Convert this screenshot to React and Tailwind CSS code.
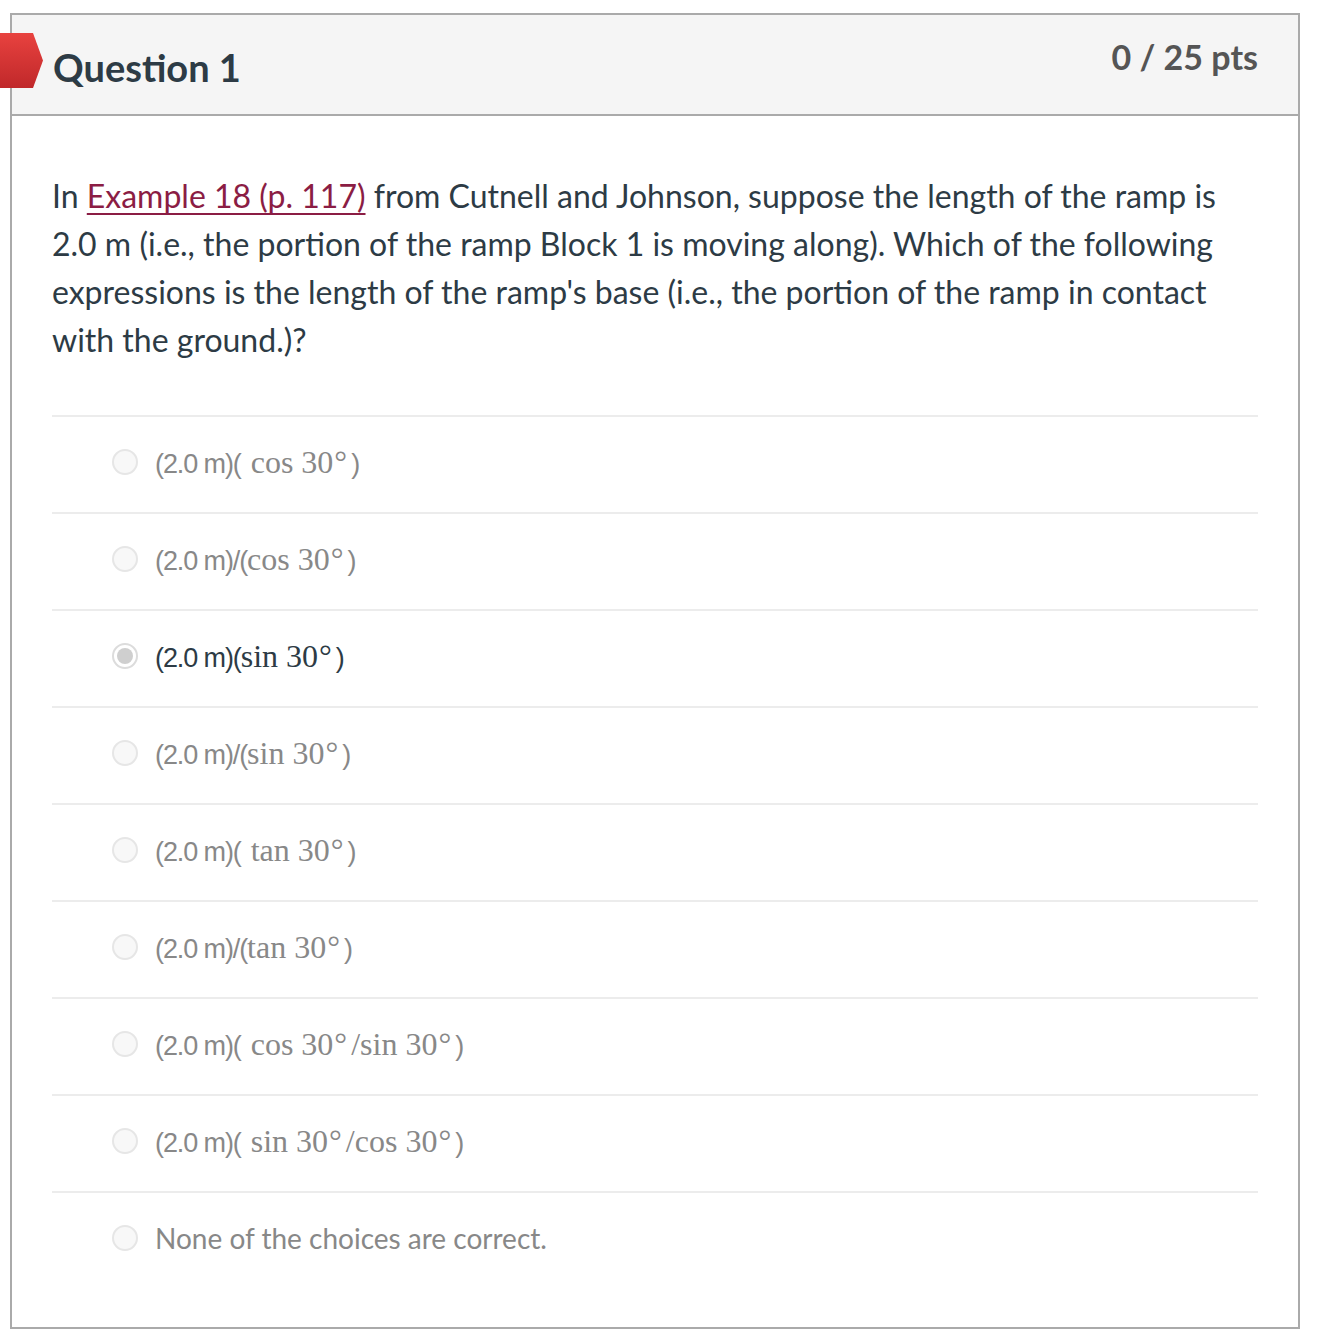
import React from "react";

const sans = "font-['Liberation_Sans',Arial,sans-serif]";
const serif = "font-['Liberation_Serif','Times_New_Roman',serif]";

function Radio({ selected }) {
  if (selected) {
    return (
      <span className="flex h-[26px] w-[26px] shrink-0 items-center justify-center rounded-full border-2 border-[#dcdcdc] bg-white">
        <span className="h-[16px] w-[16px] rounded-full bg-[#cfcfcf]" />
      </span>
    );
  }
  return <span className="h-[26px] w-[26px] shrink-0 rounded-full border-2 border-[#e6e6e6] bg-[#f8f8f8]" />;
}

function Pre({ children }) {
  return <span className={`${sans} text-[27px] tracking-[-1.1px]`}>{children}</span>;
}
function M({ children, gap }) {
  return <span className={`${serif} text-[32px] ${gap ? "ml-[10px]" : ""}`}>{children}</span>;
}
function Deg() {
  return <span className={`${serif} ml-[1px] mr-[4px] text-[32px]`}>°</span>;
}
function Close() {
  return <span className={`${sans} text-[27px]`}>)</span>;
}

const answers = [
  { el: <><Pre>(2.0 m)(</Pre><M gap>cos 30</M><Deg /><Close /></> },
  { el: <><Pre>(2.0 m)/(</Pre><M>cos 30</M><Deg /><Close /></> },
  { el: <><Pre>(2.0 m)(</Pre><M>sin 30</M><Deg /><Close /></>, selected: true },
  { el: <><Pre>(2.0 m)/(</Pre><M>sin 30</M><Deg /><Close /></> },
  { el: <><Pre>(2.0 m)(</Pre><M gap>tan 30</M><Deg /><Close /></> },
  { el: <><Pre>(2.0 m)/(</Pre><M>tan 30</M><Deg /><Close /></> },
  { el: <><Pre>(2.0 m)(</Pre><M gap>cos 30</M><Deg /><M>/sin 30</M><Deg /><Close /></> },
  { el: <><Pre>(2.0 m)(</Pre><M gap>sin 30</M><Deg /><M>/cos 30</M><Deg /><Close /></> },
  { el: <span className="text-[28px]">None of the choices are correct.</span> },
];

export default function App() {
  return (
    <div className="bg-white pl-[10px] pt-[13px] pb-[9px] font-['Lato','Liberation_Sans',sans-serif]">
      <div className="relative w-[1290px] border-2 border-[#aaaaaa]">
        <svg
          className="absolute left-[-12px] top-[18px]"
          width="43"
          height="55"
          viewBox="0 0 43 55"
        >
          <defs>
            <linearGradient id="flag" x1="0" y1="0" x2="0" y2="1">
              <stop offset="0" stopColor="#e8423f" />
              <stop offset="1" stopColor="#c0282a" />
            </linearGradient>
          </defs>
          <polygon points="0,0 33,0 43,27.5 33,55 0,55" fill="url(#flag)" />
        </svg>
        <div className="flex h-[101px] items-start justify-between border-b-2 border-[#aaaaaa] bg-[#f5f5f5] pl-[41px] pr-[40px]">
          <div className="pt-[33px] text-[38px] font-bold leading-[38px] text-[#2d3b45]">Question 1</div>
          <div className="pt-[25px] text-[34px] font-bold leading-[34px] text-[#555555]">0 / 25 pts</div>
        </div>
        <div className="px-[40px] pt-[56px] pb-[39px]">
          <p className="text-[32px] leading-[48px] text-[#2d3b45]">
            In{" "}
            <a href="#" className="text-[#8b1d44] underline decoration-[2px] underline-offset-[5px]">
              Example 18 (p. 117)
            </a>{" "}
            from Cutnell and Johnson, suppose the length of the ramp is 2.0 m (i.e., the portion of the ramp Block 1 is
            moving along). Which of the following expressions is the length of the ramp's base (i.e., the portion of the
            ramp in contact with the ground.)?
          </p>
          <div className="mt-[51px]">
            {answers.map((a, i) => (
              <div
                key={i}
                className={`flex h-[97px] items-center border-t-2 border-[#ececec] pb-[5px] pl-[60px] ${
                  a.selected ? "text-[#2d3b45]" : "text-[#888888]"
                }`}
              >
                <Radio selected={a.selected} />
                <div className="ml-[17px] whitespace-nowrap leading-none">{a.el}</div>
              </div>
            ))}
          </div>
        </div>
      </div>
    </div>
  );
}
